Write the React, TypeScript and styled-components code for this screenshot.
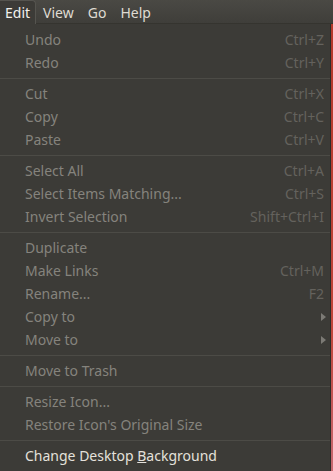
import React from 'react';
import styled, { createGlobalStyle } from 'styled-components';

type Entry =
  | { kind: 'item'; label: React.ReactNode; shortcut?: string; submenu?: boolean; enabled?: boolean }
  | { kind: 'sep' };

const GlobalStyle = createGlobalStyle`
  html, body {
    margin: 0;
    padding: 0;
    width: 333px;
    height: 471px;
    overflow: hidden;
    background: linear-gradient(180deg, #b3372a 0%, #c0463b 70%, #c86a72 100%);
  }
  * {
    box-sizing: border-box;
  }
`;

const Screen = styled.div`
  display: flex;
  flex-direction: column;
  width: 333px;
  height: 471px;
  font-family: 'Noto Sans', 'DejaVu Sans', sans-serif;
  font-size: 14px;
`;

const MenuBar = styled.div`
  display: flex;
  align-items: flex-end;
  gap: 1px;
  height: 24px;
  background: linear-gradient(180deg, #4a4944 0%, #3f3e3a 100%);
  border-bottom: 1px solid #35342f;
`;

const BarItem = styled.div<{ $open?: boolean }>`
  height: ${(p) => (p.$open ? '24px' : '23px')};
  padding: 0 ${(p) => (p.$open ? '5px' : '6px')};
  display: flex;
  align-items: center;
  color: ${(p) => (p.$open ? '#f2f1ee' : '#dfdbd2')};
  background: ${(p) => (p.$open ? '#3c3b37' : 'transparent')};
  border: 1px solid ${(p) => (p.$open ? '#55544f' : 'transparent')};
  border-bottom: none;
  border-left: none;
  border-radius: 0 4px 0 0;
  margin-bottom: ${(p) => (p.$open ? '-1px' : '0')};
  position: relative;
  z-index: 1;
`;

const Menu = styled.div`
  width: 331px;
  flex: 1;
  display: flex;
  flex-direction: column;
  padding: 4px 0;
  background: #3c3b37;
  border-right: 1px solid #2d2c29;
`;

const Row = styled.div<{ $enabled?: boolean }>`
  height: 23px;
  display: flex;
  align-items: center;
  padding: 0 4px 0 25px;
  color: ${(p) => (p.$enabled ? '#e4e1db' : '#85837d')};
`;

const Label = styled.span`
  flex: 1;
  white-space: nowrap;
`;

const Shortcut = styled.span`
  color: #64625d;
  white-space: nowrap;
  margin-right: 2px;
`;

const Arrow = styled.span`
  width: 0;
  height: 0;
  border-top: 4px solid transparent;
  border-bottom: 4px solid transparent;
  border-left: 5px solid #7c7a75;
`;

const Separator = styled.div`
  height: 8px;
  display: flex;
  align-items: center;
  &::after {
    content: '';
    flex: 1;
    height: 1px;
    background: #4c4b46;
  }
`;

const Mnemonic = styled.span`
  text-decoration: underline;
`;

const entries: Entry[] = [
  { kind: 'item', label: 'Undo', shortcut: 'Ctrl+Z' },
  { kind: 'item', label: 'Redo', shortcut: 'Ctrl+Y' },
  { kind: 'sep' },
  { kind: 'item', label: 'Cut', shortcut: 'Ctrl+X' },
  { kind: 'item', label: 'Copy', shortcut: 'Ctrl+C' },
  { kind: 'item', label: 'Paste', shortcut: 'Ctrl+V' },
  { kind: 'sep' },
  { kind: 'item', label: 'Select All', shortcut: 'Ctrl+A' },
  { kind: 'item', label: 'Select Items Matching...', shortcut: 'Ctrl+S' },
  { kind: 'item', label: 'Invert Selection', shortcut: 'Shift+Ctrl+I' },
  { kind: 'sep' },
  { kind: 'item', label: 'Duplicate' },
  { kind: 'item', label: 'Make Links', shortcut: 'Ctrl+M' },
  { kind: 'item', label: 'Rename...', shortcut: 'F2' },
  { kind: 'item', label: 'Copy to', submenu: true },
  { kind: 'item', label: 'Move to', submenu: true },
  { kind: 'sep' },
  { kind: 'item', label: 'Move to Trash' },
  { kind: 'sep' },
  { kind: 'item', label: 'Resize Icon...' },
  { kind: 'item', label: "Restore Icon's Original Size" },
  { kind: 'sep' },
  {
    kind: 'item',
    label: (
      <>
        Change Desktop <Mnemonic>B</Mnemonic>ackground
      </>
    ),
    enabled: true,
  },
];

const App: React.FC = () => {
  return (
    <Screen>
      <GlobalStyle />
      <MenuBar>
        <BarItem $open>Edit</BarItem>
        <BarItem>View</BarItem>
        <BarItem>Go</BarItem>
        <BarItem>Help</BarItem>
      </MenuBar>
      <Menu>
        {entries.map((e, i) =>
          e.kind === 'sep' ? (
            <Separator key={i} />
          ) : (
            <Row key={i} $enabled={e.enabled}>
              <Label>{e.label}</Label>
              {e.shortcut && <Shortcut>{e.shortcut}</Shortcut>}
              {e.submenu && <Arrow />}
            </Row>
          )
        )}
      </Menu>
    </Screen>
  );
};

export default App;
